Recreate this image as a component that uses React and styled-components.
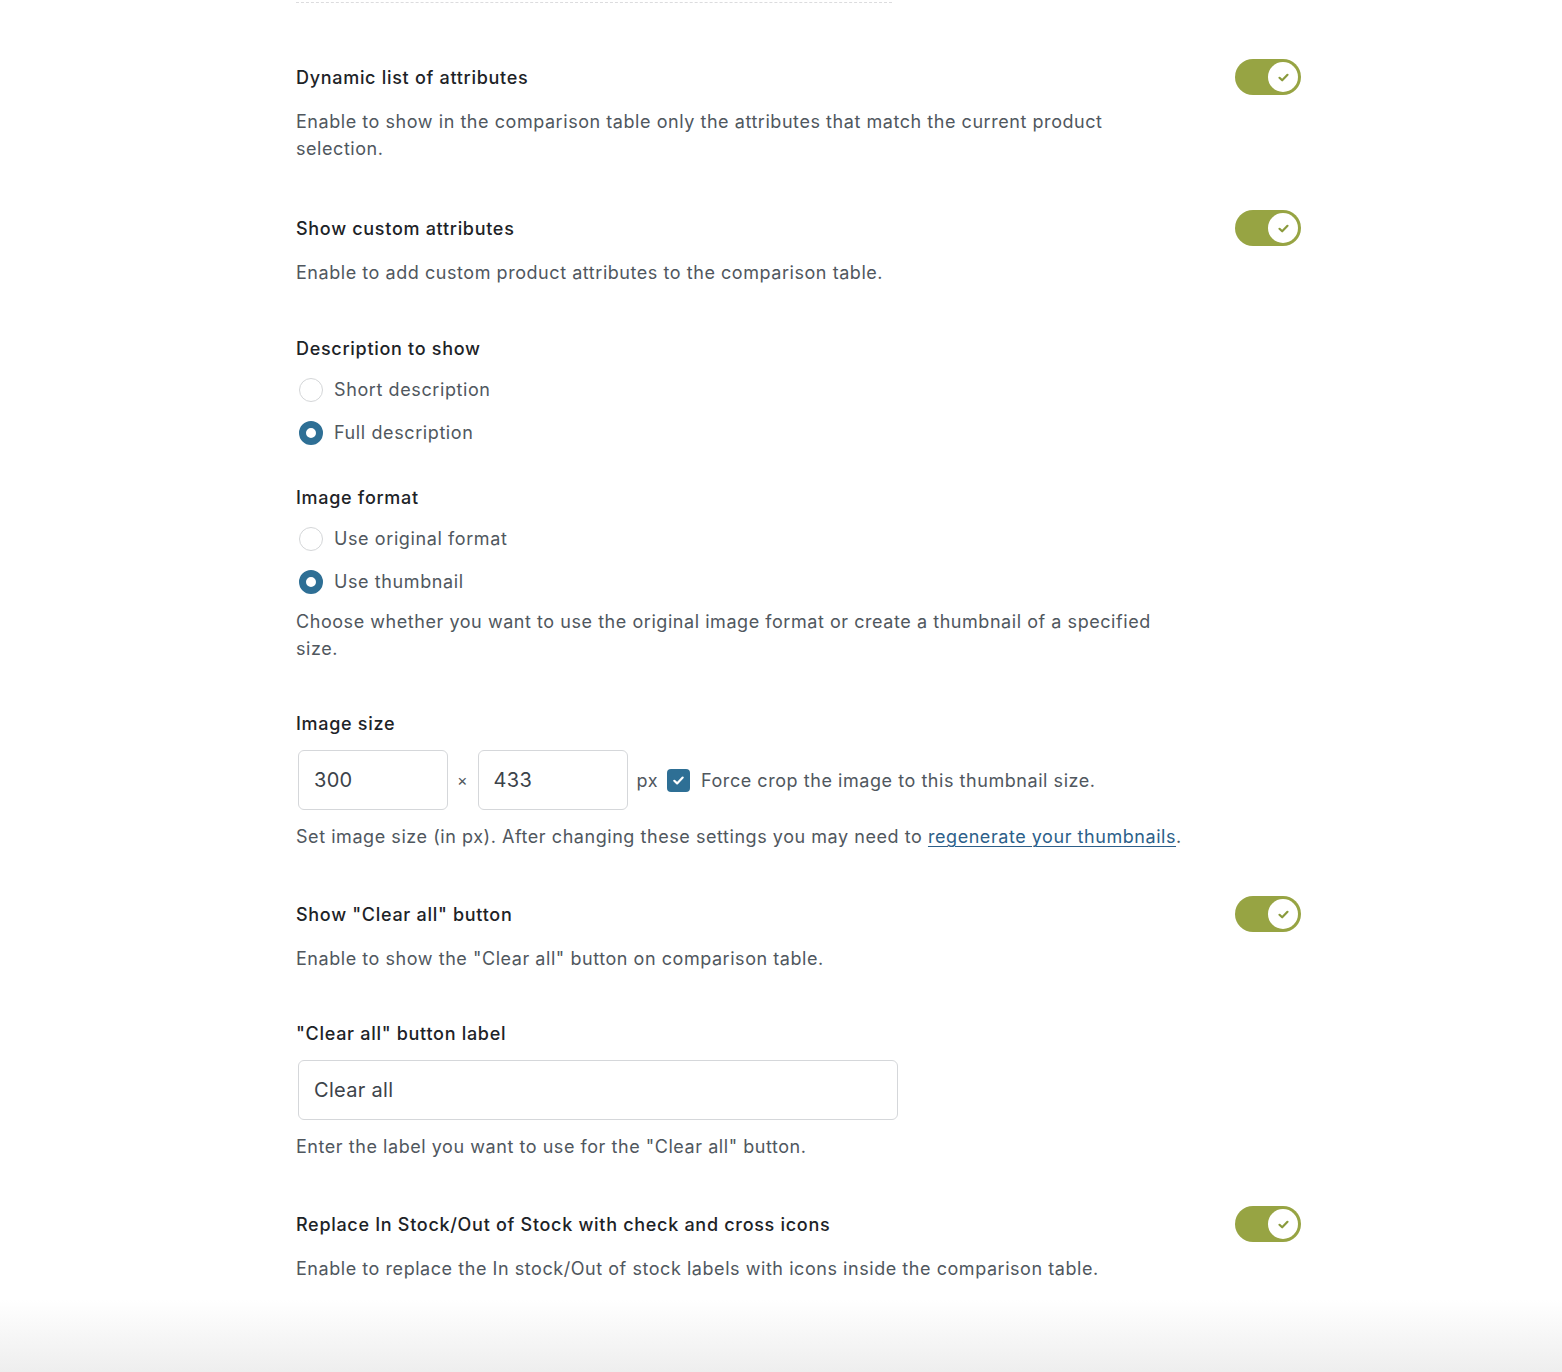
import React from "react";
import styled, { createGlobalStyle } from "styled-components";

const Global = createGlobalStyle`
  html, body { margin: 0; padding: 0; background: #fff; }
  body {
    font-family: Inter, "Noto Sans", sans-serif;
    -webkit-font-smoothing: antialiased;
  }
`;

const Page = styled.div`
  position: relative;
  min-height: 1372px;
  background: linear-gradient(to bottom, #fff 0, #fff 1300px, #eeeeee 1372px);
  box-sizing: border-box;
  padding: 0 261px 0 296px;
`;

const TopRule = styled.div`
  width: 596px;
  height: 2px;
  border-bottom: 1px dashed #dcdcde;
  margin-bottom: 56px;
`;

const Settings = styled.div`
  width: 1005px;
  display: flex;
  flex-direction: column;
`;

const Section = styled.section`
  display: flex;
  flex-direction: column;
  gap: 13px;
  margin-bottom: ${(p) => (p.$spacing ?? 48)}px;
`;

const Header = styled.div`
  display: flex;
  align-items: center;
  justify-content: space-between;
  min-height: ${(p) => (p.$toggle ? 36 : 27)}px;
`;

const Title = styled.h3`
  margin: 0;
  font-size: 18px;
  line-height: 27px;
  font-weight: 500;
  color: #1d2327;
  letter-spacing: 0.7px;
`;

const Help = styled.p`
  margin: 0;
  max-width: 893px;
  font-size: 18px;
  line-height: 27px;
  font-weight: 400;
  color: #50575e;
  letter-spacing: 0.55px;
`;

const Link = styled.a`
  color: #2c5f8a;
  text-decoration: underline;
  text-underline-offset: 3px;
  text-decoration-thickness: 1px;
`;

const ToggleTrack = styled.div`
  width: 66px;
  height: 36px;
  border-radius: 18px;
  background: #97a443;
  display: flex;
  align-items: center;
  justify-content: flex-end;
  padding: 3px;
  box-sizing: border-box;
`;

const ToggleKnob = styled.div`
  width: 30px;
  height: 30px;
  border-radius: 50%;
  background: #fff;
  display: flex;
  align-items: center;
  justify-content: center;
`;

const Toggle = () => (
  <ToggleTrack>
    <ToggleKnob>
      <svg width="13" height="13" viewBox="0 0 13 13">
        <path d="M2.5 6.8 L5.2 9.3 L10.5 3.8" fill="none" stroke="#8a9a3c" strokeWidth="2.2" strokeLinecap="round" strokeLinejoin="round" />
      </svg>
    </ToggleKnob>
  </ToggleTrack>
);

const RadioList = styled.div`
  display: flex;
  flex-direction: column;
  gap: 16px;
  margin-top: 1px;
`;

const RadioRow = styled.label`
  display: flex;
  align-items: center;
  gap: 11px;
  padding-left: 3px;
  font-size: 18px;
  line-height: 27px;
  color: #50575e;
  letter-spacing: 0.6px;
`;

const RadioDot = styled.span`
  width: 24px;
  height: 24px;
  border-radius: 50%;
  box-sizing: border-box;
  border: ${(p) => (p.$checked ? "7px solid #2e6f95" : "1px solid #d4d6d8")};
  background: #fff;
  flex: none;
`;

const Radio = ({ checked, children }) => (
  <RadioRow>
    <RadioDot $checked={checked} />
    {children}
  </RadioRow>
);

const SizeRow = styled.div`
  display: flex;
  align-items: center;
  padding-left: 2px;
  font-size: 18px;
  color: #50575e;
`;

const TextBox = styled.div`
  width: ${(p) => p.$w}px;
  height: 60px;
  box-sizing: border-box;
  border: 1px solid #d5d7da;
  border-radius: 6px;
  display: flex;
  align-items: center;
  padding-left: 15px;
  font-size: 20px;
  letter-spacing: 0.3px;
  color: #3c434a;
  background: #fff;
`;

const Times = styled.span`
  margin: 0 10px 0 9px;
  font-size: 16px;
  color: #50575e;
`;

const Px = styled.span`
  margin-left: 9px;
  font-size: 18px;
  letter-spacing: 0.5px;
  color: #50575e;
`;

const CheckBox = styled.span`
  width: 23px;
  height: 23px;
  margin: 0 11px 0 9px;
  border-radius: 4px;
  background: #2e6f95;
  display: flex;
  align-items: center;
  justify-content: center;
`;

const CheckLabel = styled.span`
  font-size: 18px;
  color: #50575e;
  letter-spacing: 0.55px;
`;

export default function App() {
  return (
    <>
      <Global />
      <Page>
        <TopRule />
        <Settings>
          <Section>
            <Header $toggle>
              <Title>Dynamic list of attributes</Title>
              <Toggle />
            </Header>
            <Help>
              Enable to show in the comparison table only the attributes that match the current product selection.
            </Help>
          </Section>

          <Section $spacing={49}>
            <Header $toggle>
              <Title>Show custom attributes</Title>
              <Toggle />
            </Header>
            <Help>Enable to add custom product attributes to the comparison table.</Help>
          </Section>

          <Section $spacing={38}>
            <Header>
              <Title>Description to show</Title>
            </Header>
            <RadioList>
              <Radio>Short description</Radio>
              <Radio checked>Full description</Radio>
            </RadioList>
          </Section>

          <Section>
            <Header>
              <Title>Image format</Title>
            </Header>
            <RadioList>
              <Radio>Use original format</Radio>
              <Radio checked>Use thumbnail</Radio>
            </RadioList>
            <Help>
              Choose whether you want to use the original image format or create a thumbnail of a specified size.
            </Help>
          </Section>

          <Section $spacing={46}>
            <Header>
              <Title>Image size</Title>
            </Header>
            <SizeRow>
              <TextBox $w={150}>300</TextBox>
              <Times>×</Times>
              <TextBox $w={150}>433</TextBox>
              <Px>px</Px>
              <CheckBox>
                <svg width="13" height="13" viewBox="0 0 13 13">
                  <path d="M2.3 6.8 L5.1 9.4 L10.7 3.6" fill="none" stroke="#fff" strokeWidth="2.2" strokeLinecap="round" strokeLinejoin="round" />
                </svg>
              </CheckBox>
              <CheckLabel>Force crop the image to this thumbnail size.</CheckLabel>
            </SizeRow>
            <Help>
              Set image size (in px). After changing these settings you may need to{" "}
              <Link href="#">regenerate your thumbnails</Link>.
            </Help>
          </Section>

          <Section>
            <Header $toggle>
              <Title>Show "Clear all" button</Title>
              <Toggle />
            </Header>
            <Help>Enable to show the "Clear all" button on comparison table.</Help>
          </Section>

          <Section $spacing={46}>
            <Header>
              <Title>"Clear all" button label</Title>
            </Header>
            <SizeRow>
              <TextBox $w={600}>Clear all</TextBox>
            </SizeRow>
            <Help>Enter the label you want to use for the "Clear all" button.</Help>
          </Section>

          <Section $spacing={0}>
            <Header $toggle>
              <Title>Replace In Stock/Out of Stock with check and cross icons</Title>
              <Toggle />
            </Header>
            <Help>Enable to replace the In stock/Out of stock labels with icons inside the comparison table.</Help>
          </Section>
        </Settings>
      </Page>
    </>
  );
}
